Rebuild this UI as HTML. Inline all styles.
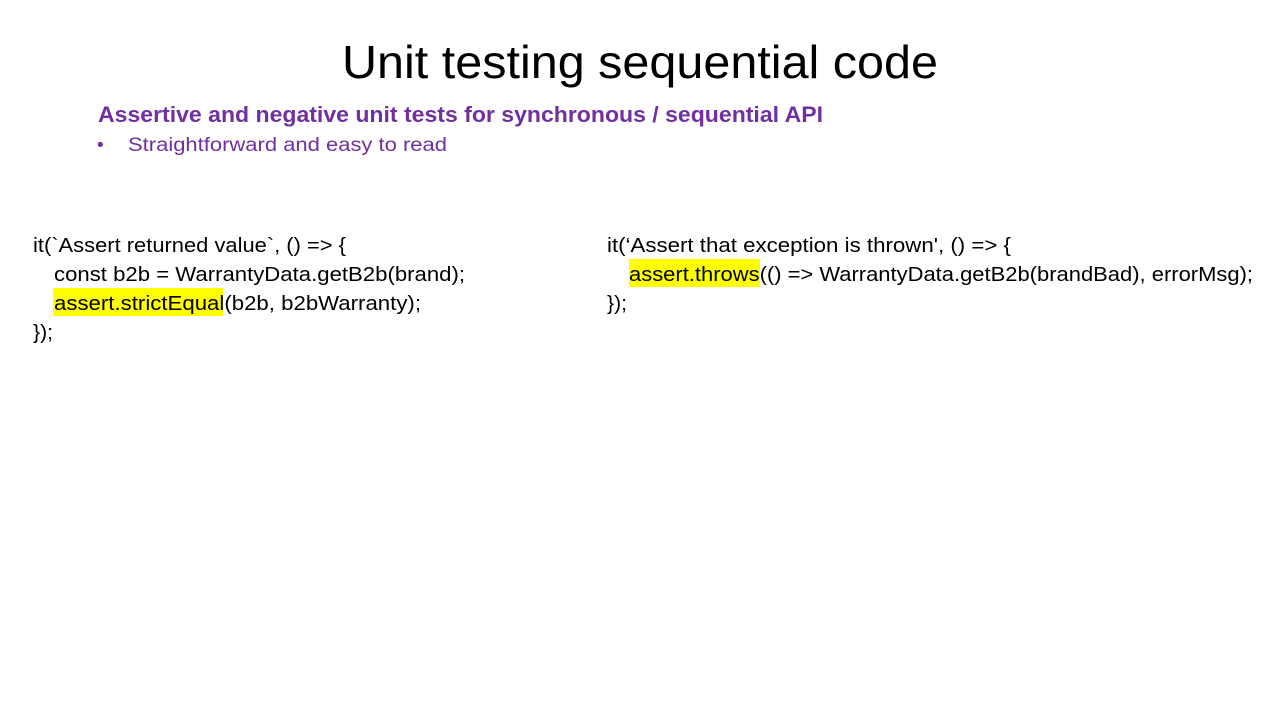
<!DOCTYPE html>
<html><head><meta charset="utf-8"><style>
html,body{margin:0;padding:0;background:#fff;width:1280px;height:720px;overflow:hidden}
svg{display:block}
text{font-family:"Liberation Sans",sans-serif}
</style></head><body>
<svg width="1280" height="720" viewBox="0 0 1280 720" xmlns="http://www.w3.org/2000/svg">
<rect width="1280" height="720" fill="#fff"/>
<text x="342" y="78" font-size="46" fill="#000" textLength="596" lengthAdjust="spacingAndGlyphs">Unit testing sequential code</text>
<text x="98" y="122" font-size="22" font-weight="bold" fill="#7030A0" textLength="725" lengthAdjust="spacingAndGlyphs">Assertive and negative unit tests for synchronous / sequential API</text>
<text x="97" y="151" font-size="19" fill="#7030A0">•</text>
<text x="128" y="151" font-size="19" fill="#7030A0" textLength="319" lengthAdjust="spacingAndGlyphs">Straightforward and easy to read</text>

<rect x="53" y="288" width="170" height="28" fill="#ffff00"/>
<rect x="629" y="259" width="131" height="28" fill="#ffff00"/>

<g font-size="20" fill="#000">
<text x="33" y="252" textLength="313" lengthAdjust="spacingAndGlyphs">it(`Assert returned value`, () =&gt; {</text>
<text x="54" y="281" textLength="411" lengthAdjust="spacingAndGlyphs">const b2b = WarrantyData.getB2b(brand);</text>
<text x="54" y="310" textLength="367" lengthAdjust="spacingAndGlyphs">assert.strictEqual(b2b, b2bWarranty);</text>
<text x="33" y="339" textLength="20" lengthAdjust="spacingAndGlyphs">});</text>

<text x="607" y="252" textLength="404" lengthAdjust="spacingAndGlyphs">it(‘Assert that exception is thrown', () =&gt; {</text>
<text x="629" y="281" textLength="624" lengthAdjust="spacingAndGlyphs">assert.throws(() =&gt; WarrantyData.getB2b(brandBad), errorMsg);</text>
<text x="607" y="310" textLength="20" lengthAdjust="spacingAndGlyphs">});</text>
</g>
</svg>
</body></html>
